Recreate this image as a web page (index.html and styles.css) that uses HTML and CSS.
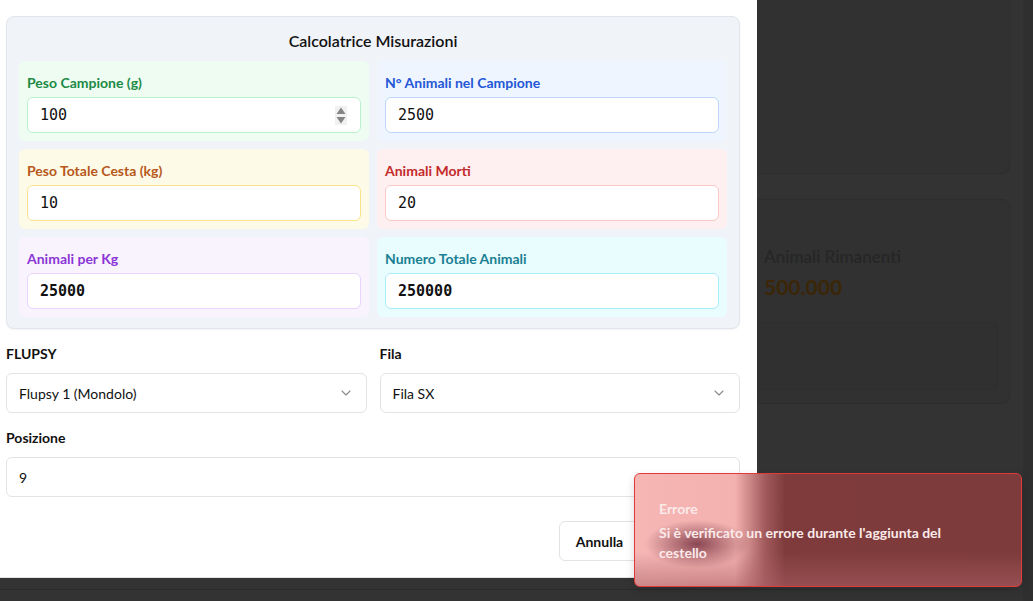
FILE: index.html
```html
<!DOCTYPE html>
<html lang="it">
<head>
<meta charset="utf-8">
<title>Calcolatrice Misurazioni</title>
<link rel="stylesheet" href="styles.css">
</head>
<body>
<div class="backdrop">
  <div class="bg-main">
    <div class="bg-card bg-card-top"></div>
    <div class="bg-card bg-card-stats">
      <div class="stat">
        <div class="stat-label">Animali Rimanenti</div>
        <div class="stat-value">500.000</div>
      </div>
      <div class="bg-inner"></div>
    </div>
    <div class="bg-bottom"></div>
  </div>
  <div class="bg-scroll"></div>
</div>

<div class="modal">
  <section class="calc">
    <h2 class="calc-title">Calcolatrice Misurazioni</h2>
    <div class="calc-grid">
      <div class="cell cell-green">
        <label class="cell-label">Peso Campione (g)</label>
        <div class="field">
          <span class="field-value">100</span>
          <svg class="spinner" width="12" height="19" viewBox="0 0 12 19">
            <rect x="0" y="0" width="12" height="19" fill="#f1f1f1"/>
            <path d="M6 1.5 L10.5 8 L1.5 8 Z" fill="#858585"/>
            <path d="M6 17.5 L10.5 11 L1.5 11 Z" fill="#858585"/>
          </svg>
        </div>
      </div>
      <div class="cell cell-blue">
        <label class="cell-label">N° Animali nel Campione</label>
        <div class="field"><span class="field-value">2500</span></div>
      </div>
      <div class="cell cell-yellow">
        <label class="cell-label">Peso Totale Cesta (kg)</label>
        <div class="field"><span class="field-value">10</span></div>
      </div>
      <div class="cell cell-red">
        <label class="cell-label">Animali Morti</label>
        <div class="field"><span class="field-value">20</span></div>
      </div>
      <div class="cell cell-purple">
        <label class="cell-label">Animali per Kg</label>
        <div class="field"><span class="field-value strong">25000</span></div>
      </div>
      <div class="cell cell-cyan">
        <label class="cell-label">Numero Totale Animali</label>
        <div class="field"><span class="field-value strong">250000</span></div>
      </div>
    </div>
  </section>

  <div class="form-row">
    <div class="form-group">
      <label class="form-label">FLUPSY</label>
      <div class="select">
        <span>Flupsy 1 (Mondolo)</span>
        <svg class="chev" width="16" height="16" viewBox="0 0 24 24" fill="none" stroke="#8a8a8a" stroke-width="1.6" stroke-linecap="round" stroke-linejoin="round"><path d="m6 9 6 6 6-6"/></svg>
      </div>
    </div>
    <div class="form-group">
      <label class="form-label">Fila</label>
      <div class="select">
        <span>Fila SX</span>
        <svg class="chev" width="16" height="16" viewBox="0 0 24 24" fill="none" stroke="#8a8a8a" stroke-width="1.6" stroke-linecap="round" stroke-linejoin="round"><path d="m6 9 6 6 6-6"/></svg>
      </div>
    </div>
  </div>

  <div class="form-group form-single">
    <label class="form-label">Posizione</label>
    <div class="text-input">9</div>
  </div>

  <div class="footer">
    <button class="btn btn-outline">Annulla</button>
    <button class="btn btn-primary" aria-label="Aggiungi"></button>
  </div>
</div>

<div class="toast">
  <div class="toast-title">Errore</div>
  <div class="toast-desc">Si è verificato un errore durante l'aggiunta del cestello</div>
</div>
</body>
</html>
```

FILE: styles.css
```css
* { box-sizing: border-box; }

html, body {
  margin: 0;
  padding: 0;
  width: 1033px;
  height: 601px;
  overflow: hidden;
}

body {
  background: #333333;
  font-family: "Lato", "Noto Sans", sans-serif;
  font-size: 14px;
  color: #111111;
  position: relative;
}

/* dimmed page behind the modal */
.backdrop {
  display: flex;
  height: 601px;
}

.bg-main {
  flex: 1;
  display: flex;
  flex-direction: column;
  padding-right: 13px;
}

.bg-scroll {
  width: 10px;
  background: #2f2f2f;
}

.bg-card {
  background: #313131;
  border: 1px solid #2d2d2d;
  border-radius: 8px;
}

.bg-card-top {
  height: 174px;
  border-top-left-radius: 0;
  border-top-right-radius: 0;
  border-top: none;
}

.bg-card-stats {
  margin-top: 25px;
  height: 205px;
  padding: 46px 11px 12px;
  display: flex;
  flex-direction: column;
  align-items: flex-end;
}

.stat {
  width: 234px;
}

.stat-label {
  font-size: 17px;
  font-weight: 600;
  line-height: 22px;
  color: #262626;
}

.stat-value {
  margin-top: 6px;
  font-size: 21px;
  font-weight: 700;
  line-height: 26px;
  color: #3b2607;
}

.bg-inner {
  margin-top: 22px;
  width: 100%;
  height: 68px;
  background: #303030;
  border: 1px solid #2e2e2e;
  border-radius: 6px;
}

.bg-bottom {
  margin-top: auto;
  height: 12px;
  border-top: 1px solid #2b2b2b;
}

/* modal */
.modal {
  position: absolute;
  left: 0;
  top: 0;
  width: 757px;
  height: 578px;
  background: #ffffff;
  border-bottom: 1px solid #e3e3e3;
  padding: 16px 17px 0 6px;
}

.calc {
  background: #f0f3f8;
  border: 1px solid #e1e5ec;
  border-radius: 8px;
  padding: 12px 12px 11px;
  box-shadow: 0 1px 2px rgba(0,0,0,0.05);
}

.calc-title {
  margin: 0 0 8px;
  text-align: center;
  font-size: 16px;
  font-weight: 600;
  line-height: 24px;
  color: #111111;
}

.calc-grid {
  display: grid;
  grid-template-columns: 1fr 1fr;
  gap: 8px;
}

.cell {
  border-radius: 6px;
  padding: 12px 8px 8px;
  height: 80px;
}

.cell-label {
  display: block;
  font-size: 14px;
  font-weight: 700;
  line-height: 20px;
  margin-bottom: 4px;
}

.field {
  height: 36px;
  background: #ffffff;
  border: 1px solid #ccc;
  border-radius: 6px;
  padding: 0 12px;
  display: flex;
  align-items: center;
  justify-content: space-between;
}

.field-value {
  font-family: "DejaVu Sans Mono", "Liberation Mono", monospace;
  font-size: 15px;
  color: #111111;
}

.field-value.strong { font-weight: 700; }

.spinner { margin-right: 1px; }

.cell-green { background: #eefcf2; }
.cell-green .cell-label { color: #1d8a46; }
.cell-green .field { border-color: #b9f3cd; }

.cell-blue { background: #eef5ff; }
.cell-blue .cell-label { color: #2456d6; }
.cell-blue .field { border-color: #bcd7fb; }

.cell-yellow { background: #fefae8; }
.cell-yellow .cell-label { color: #b6581a; }
.cell-yellow .field { border-color: #fbe38a; }

.cell-red { background: #fef0f0; }
.cell-red .cell-label { color: #c42a2a; }
.cell-red .field { border-color: #fbc6c6; }

.cell-purple { background: #f9f3fe; }
.cell-purple .cell-label { color: #8b35d6; }
.cell-purple .field { border-color: #e8d4fc; }

.cell-cyan { background: #e9fcfe; }
.cell-cyan .cell-label { color: #1a7f93; }
.cell-cyan .field { border-color: #a6eef8; }

/* lower form */
.form-row {
  margin-top: 15px;
  display: grid;
  grid-template-columns: 1fr 1fr;
  gap: 13px;
}

.form-label {
  display: block;
  font-size: 14px;
  font-weight: 700;
  line-height: 20px;
  margin-bottom: 9px;
  color: #111111;
}

.select, .text-input {
  height: 40px;
  border: 1px solid #e3e3e3;
  border-radius: 6px;
  padding: 0 12px;
  display: flex;
  align-items: center;
  font-size: 14px;
  color: #111111;
  background: #fff;
}

.select { justify-content: space-between; }

.form-single { margin-top: 15px; }

.footer {
  margin-top: 24px;
  display: flex;
  justify-content: flex-end;
  gap: 8px;
}

.btn {
  height: 40px;
  padding: 0 16px;
  border-radius: 6px;
  font-family: "Lato", "Noto Sans", sans-serif;
  font-size: 14px;
  font-weight: 700;
}

.btn-outline {
  width: 81px;
  padding: 0;
  background: #fff;
  border: 1px solid #e3e3e3;
  color: #111;
}

.btn-primary {
  width: 92px;
  background: #1e2430;
  border: 1px solid #1e2430;
}

.toast {
  position: absolute;
  left: 634px;
  top: 473px;
  width: 388px;
  height: 114px;
  border: 1px solid #e23a3a;
  border-radius: 6px;
  background:
    radial-gradient(ellipse 52px 24px at 62px 70px, rgba(120, 52, 66, 0.85), rgba(120, 52, 66, 0) 100%),
    linear-gradient(to bottom, rgba(160, 90, 95, 0) 0, rgba(160, 90, 95, 0) 78px, rgba(170, 95, 100, 0.55) 100%),
    linear-gradient(to right, #f6b6b4 0, #f3b1af 100px, #a25a5c 130px, #7f3b3b 150px, #7e3b3b 100%);
  padding: 24px 32px 24px 24px;
  color: #fbeaea;
  font-size: 14px;
  font-weight: 700;
  line-height: 20px;
  box-shadow: 0 4px 10px rgba(0,0,0,0.15);
}

.toast-title {
  margin-top: 1px;
  margin-bottom: 4px;
}

.toast-desc {
  width: 305px;
}
```
